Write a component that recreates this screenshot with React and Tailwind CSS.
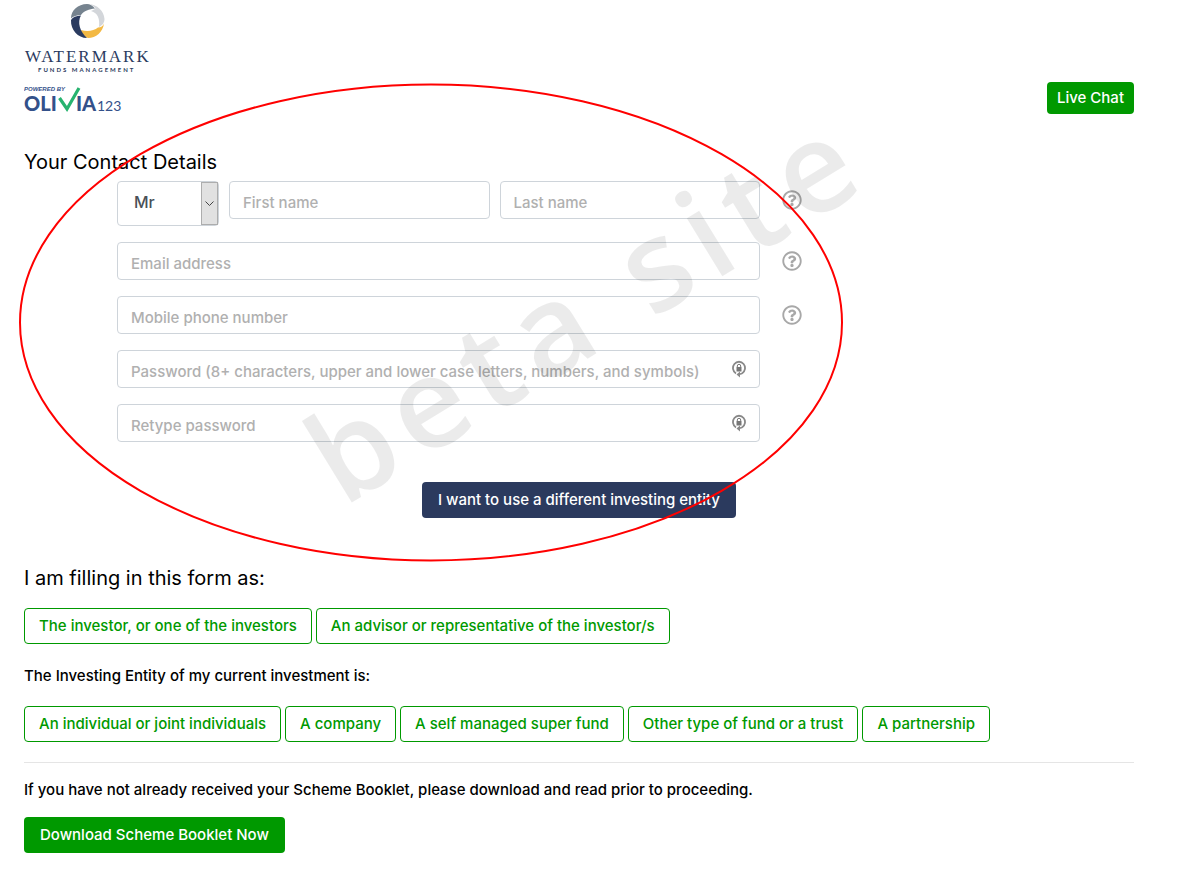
import React, { useState } from 'react';
import { FaRegQuestionCircle } from 'react-icons/fa';

const ROLES = ['The investor, or one of the investors', 'An advisor or representative of the investor/s'];

const ENTITIES = [
  'An individual or joint individuals',
  'A company',
  'A self managed super fund',
  'Other type of fund or a trust',
  'A partnership',
];

const inputClass = 'block h-[38px] w-full rounded border border-[#ced4da] bg-white px-[13px] pt-1 text-[15px] font-medium text-[#495057] placeholder-[#b0b0b0] outline-none focus:border-[#009900]';

function Logo() {
  return (
    <svg width="130" height="114" viewBox="0 0 130 114" role="img" aria-label="Watermark Funds Management, powered by Olivia123">
      <path d="M47 18.500 C47 10 54 4.300 63 4 C66 4 69 6 71 8.500 C65 9 60 11 57 15 C53 15 49 16.500 47 18.500Z" fill="#76838f" />
      <path d="M65 4 C73 4.500 80 11 80.500 19 C80.500 22 79 25 75 27 C76 19 74 13 67 11 C69.500 10 71 9 71.500 8.500 C70 6.500 68 5 65 4Z" fill="#d3d6da" />
      <path d="M80 23.500 C79 32 72 38 64 38 C61 37 58 34.500 57 30 C63 32 70 31 74 27.500 C77 27.500 79 26 80 23.500Z" fill="#f3b944" />
      <path d="M47 20 C49 17 52 15.800 57 15.500 C53 22 56 32 63 38 C54 38 46.500 30 47 20Z" fill="#2b3b60" />
      <text x="1" y="62" className="fill-[#2b3b60] font-['Liberation_Serif'] text-[17px] tracking-[2px]">WATERMARK</text>
      <text x="14" y="72" className="fill-[#2b3b60] font-['Lato'] text-[6px] font-bold tracking-[2px]">FUNDS MANAGEMENT</text>
      <text x="0" y="91" className="fill-[#33518a] font-['Liberation_Sans'] text-[6px] font-bold italic">POWERED BY</text>
      <text x="0" y="111" className="fill-[#33518a] font-['Lato'] text-[20px] font-black">OLI</text>
      <path d="M35.500 98 L43 109 L55 88" fill="none" stroke="#27b36f" strokeWidth="3.2" />
      <text x="52" y="111" className="fill-[#33518a] font-['Lato'] text-[20px] font-black">IA</text>
      <text x="73" y="111" className="fill-[#33518a] font-['Lato'] text-[14px]">123</text>
    </svg>
  );
}

// small lock inside a circular arrow, shown at the end of password boxes
function LockIcon() {
  return (
    <svg width="14" height="18" viewBox="0 0 14 18" fill="none" aria-hidden="true">
      <path d="M4 13.5 A6 6.300 0 1 1 10 13.5" stroke="#888" strokeWidth="1.8" />
      <path d="M10 13.5 L6.5 14.5" stroke="#888" strokeWidth="1.6" />
      <path d="M8 11.5 L4.5 14.5 L8 17.5Z" fill="#888" />
      <rect x="4.5" y="7" width="5" height="4.5" fill="#777" />
      <path d="M5.3 7 V6 A1.7 1.7 0 0 1 8.7 6 V7" stroke="#777" />
    </svg>
  );
}

function HelpButton({ label }) {
  return (
    <button type="button" aria-label={label} className="ml-[22px] flex h-[38px] shrink-0 items-center text-[#a8a8a8]">
      <FaRegQuestionCircle size={20} />
    </button>
  );
}

function Field({ label, type = 'text', help }) {
  const isPassword = type === 'password';
  return (
    <div className="flex">
      <div className="relative w-full max-w-[643px]">
        <input type={type} aria-label={label} placeholder={label} className={inputClass} />
        {isPassword && (
          <span className="pointer-events-none absolute right-3.5 top-2.5">
            <LockIcon />
          </span>
        )}
      </div>
      {help && <HelpButton label={`Help: ${label}`} />}
    </div>
  );
}

function ChoiceButtons({ items, value, onSelect }) {
  return (
    <div className="flex flex-wrap gap-1">
      {items.map(item => (
        <button
          key={item}
          type="button"
          aria-pressed={value === item}
          onClick={() => onSelect(item)}
          className="h-9 rounded border border-[#009900] bg-white px-3.5 font-medium text-[#009900]"
        >
          {item}
        </button>
      ))}
    </div>
  );
}

function Watermark() {
  return (
    <svg className="pointer-events-none absolute left-0 top-0 overflow-visible" width="900" height="580" viewBox="0 0 900 580" aria-hidden="true">
      <text x="343" y="508" transform="rotate(-31.4 343 508)" className="fill-black/8 font-['Open_Sans'] text-[126px] font-semibold tracking-[11px]">beta site</text>
      <ellipse cx="431" cy="322.5" rx="411" ry="238" fill="none" stroke="#f00" strokeWidth="2" />
    </svg>
  );
}

export default function App() {
  const [title, setTitle] = useState('Mr');
  const [role, setRole] = useState(null);
  const [entity, setEntity] = useState(null);

  return (
    <div className="relative bg-white font-['Inter',sans-serif] text-[15px] text-black">
      <main className="max-w-[1158px] px-6 pb-6">
        <header className="flex items-end justify-between">
          <Logo />
          <button type="button" className="h-8 rounded bg-[#009900] px-2.5 font-medium text-white">Live Chat</button>
        </header>

        <h2 className="mt-9 text-xl leading-6">Your Contact Details</h2>
        <form className="mt-[7px] flex flex-col gap-4 pl-[93px]" onSubmit={e => e.preventDefault()}>
          <div className="flex">
            <div className="flex w-full max-w-[643px] items-start gap-2.5">
              <div className="relative w-[102px] shrink-0">
                <select
                  aria-label="Title"
                  value={title}
                  onChange={e => setTitle(e.target.value)}
                  className="block h-[45px] w-full appearance-none rounded border border-[#ced4da] bg-white pb-1 pl-4 pr-5 text-base font-medium text-[#495057]"
                >
                  <option>Mr</option>
                  <option>Mrs</option>
                  <option>Ms</option>
                  <option>Dr</option>
                </select>
                <span className="pointer-events-none absolute inset-y-px right-px flex w-[17px] items-center justify-center border border-[#adadad] bg-[#e1e1e1]">
                  <svg width="9" height="6" viewBox="0 0 9 6" fill="none" stroke="#444" aria-hidden="true">
                    <path d="M.5 .5 L4.5 4.5 L8.5 .5" />
                  </svg>
                </span>
              </div>
              <input aria-label="First name" placeholder="First name" className={inputClass} />
              <input aria-label="Last name" placeholder="Last name" className={inputClass} />
            </div>
            <HelpButton label="Help: your name" />
          </div>
          <Field label="Email address" type="email" help />
          <Field label="Mobile phone number" type="tel" help />
          <Field label="Password (8+ characters, upper and lower case letters, numbers, and symbols)" type="password" />
          <Field label="Retype password" type="password" />
          <div className="mt-6 flex max-w-[643px] justify-end pr-6">
            <button type="button" className="h-9 rounded bg-[#2b3a5e] px-4 font-medium text-white">
              I want to use a different investing entity
            </button>
          </div>
        </form>

        <h2 className="mt-12 text-xl leading-6">I am filling in this form as:</h2>
        <div className="mt-[18px]">
          <ChoiceButtons items={ROLES} value={role} onSelect={setRole} />
        </div>

        <p className="mt-5 font-medium leading-6">The Investing Entity of my current investment is:</p>
        <div className="mt-[18px]">
          <ChoiceButtons items={ENTITIES} value={entity} onSelect={setEntity} />
        </div>

        <hr className="mt-5 border-[#e5e5e5]" />
        <p className="mt-[15px] font-medium leading-6">If you have not already received your Scheme Booklet, please download and read prior to proceeding.</p>
        <button type="button" className="mt-[15px] h-9 rounded bg-[#009900] px-4 font-medium text-white">
          Download Scheme Booklet Now
        </button>
      </main>
      <Watermark />
    </div>
  );
}
